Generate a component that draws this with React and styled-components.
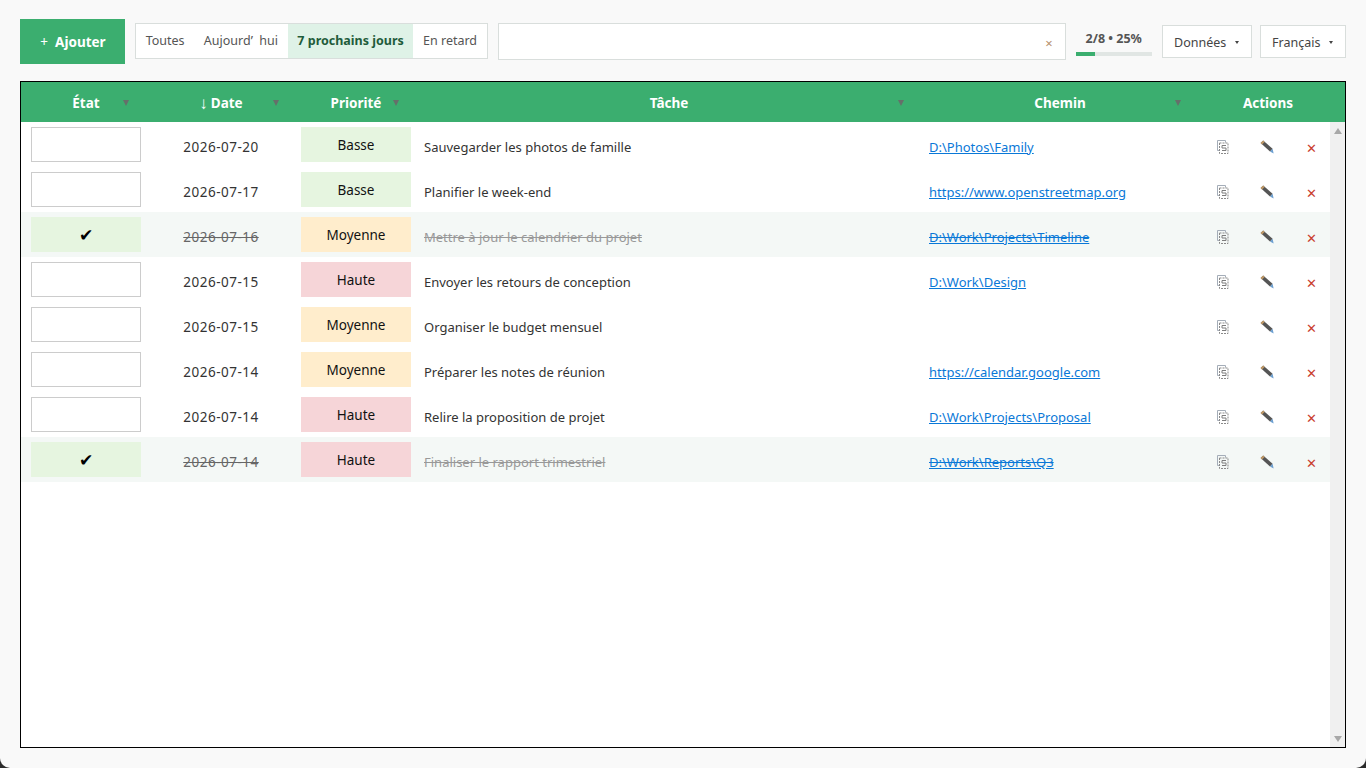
import React from "react";
import styled, { createGlobalStyle } from "styled-components";

const GREEN = "#3bae6f";
const COLUMNS = "130px 140px 130px 496px 286px 1fr";

const GlobalStyle = createGlobalStyle`
  html {
    background: #2b2b2b;
    height: 100%;
  }
  body {
    margin: 0;
    height: 768px;
    overflow: hidden;
    background: #f9f9f9;
    border-radius: 0 0 10px 10px;
    font-family: "Noto Sans", "Open Sans", sans-serif;
    font-size: 13px;
    color: #333;
  }
`;

const Page = styled.div`
  display: flex;
  flex-direction: column;
  height: 768px;
  padding: 19px 20px 20px;
  box-sizing: border-box;
`;

const Toolbar = styled.div`
  display: flex;
  align-items: center;
  height: 45px;
  margin-bottom: 17px;
`;

const AddButton = styled.button`
  width: 105px;
  height: 45px;
  margin-right: 10px;
  padding: 1px 0 0 1px;
  border: 0;
  background: ${GREEN};
  color: #fff;
  font: 700 13.5px "Noto Sans", sans-serif;
  span {
    font-weight: 400;
    margin-right: 7px;
  }
`;

const Filters = styled.div`
  display: flex;
  height: 34px;
  margin: -1px 10px 0 0;
  border: 1px solid #d9dedc;
  background: #fff;
`;

const Filter = styled.div`
  display: flex;
  align-items: center;
  padding: 0 9.65px 1px;
  font-size: 12.5px;
  font-weight: ${(p) => (p.$active ? 700 : 400)};
  color: ${(p) => (p.$active ? "#1f5c3b" : "#555")};
  background: ${(p) => (p.$active ? "#dff2e7" : "transparent")};
  white-space: pre;
`;

const Search = styled.div`
  display: flex;
  align-items: center;
  justify-content: flex-end;
  width: 568px;
  height: 37px;
  margin: 0 10px 0 0;
  padding: 2px 12px 0 0;
  box-sizing: border-box;
  border: 1px solid #d9dedc;
  background: #fff;
  color: #b5906a;
  font-size: 13px;
`;

const Progress = styled.div`
  width: 76px;
  margin: 4px 10px 0 0;
  text-align: center;
  font-size: 12.5px;
  font-weight: 700;
  color: #555;
`;

const ProgressLabel = styled.div`
  line-height: 16px;
  margin-bottom: 5px;
`;

const ProgressTrack = styled.div`
  height: 4px;
  background: #e1e6e4;
`;

const ProgressFill = styled.div`
  height: 100%;
  background: ${GREEN};
`;

const Dropdown = styled.div`
  display: flex;
  align-items: center;
  justify-content: center;
  gap: 9px;
  width: ${(p) => p.$width}px;
  height: 33px;
  margin-right: ${(p) => p.$gap}px;
  padding-top: 1px;
  box-sizing: border-box;
  border: 1px solid #d9dedc;
  background: #fff;
  font-size: 12.5px;
  color: #444;
  i {
    border: 2px solid transparent;
    border-top: 3px solid #444;
    border-bottom: 0;
  }
`;

const Table = styled.div`
  display: flex;
  flex-direction: column;
  height: 667px;
  box-sizing: border-box;
  border: 1px solid #000;
  background: #fff;
`;

const HeaderRow = styled.div`
  display: grid;
  grid-template-columns: ${COLUMNS};
  height: 40px;
  background: ${GREEN};
  color: #fff;
  font-weight: 700;
  font-size: 13.5px;
`;

const HeaderCell = styled.div`
  position: relative;
  display: flex;
  align-items: center;
  justify-content: center;
  padding: 1px ${(p) => p.$pad || 0}px 0 0;
`;

const SortArrow = styled.span`
  font-weight: 400;
  font-size: 17px;
  line-height: 1;
  margin-right: 3px;
`;

const FilterMark = styled.i`
  position: absolute;
  top: 18px;
  right: ${(p) => p.$right}px;
  border: 3.5px solid transparent;
  border-top: 6px solid #666f6a;
  border-bottom: 0;
`;

const Body = styled.div`
  display: flex;
  flex: 1;
  min-height: 0;
`;

const Rows = styled.div`
  flex: 1;
  min-width: 0;
`;

const Row = styled.div`
  display: grid;
  grid-template-columns: ${COLUMNS};
  height: 45px;
  background: ${(p) => (p.$done ? "#f4f8f6" : "transparent")};
`;

const Cell = styled.div`
  display: flex;
  align-items: center;
  padding-top: 5px;
  box-sizing: border-box;
  color: ${(p) => (p.$done ? "#999" : "#333")};
  text-decoration: ${(p) => (p.$done ? "line-through" : "none")};
`;

const StateBox = styled.div`
  width: 110px;
  height: 35px;
  margin: 5px 0 0 10px;
  display: flex;
  align-items: center;
  justify-content: center;
  box-sizing: border-box;
  border: ${(p) => (p.$done ? "0" : "1px solid #ccc")};
  background: ${(p) => (p.$done ? "#e6f5e0" : "#fff")};
  color: #000;
  font: 17px "DejaVu Sans", sans-serif;
`;

const DateCell = styled(Cell)`
  justify-content: center;
  font-size: 13.5px;
  letter-spacing: 0.5px;
  color: ${(p) => (p.$done ? "#666" : "#333")};
`;

const PriorityBox = styled.div`
  width: 110px;
  height: 35px;
  margin: 5px 0 0 10px;
  display: flex;
  align-items: center;
  justify-content: center;
  background: ${(p) => p.$bg};
  color: #111;
  font-size: 13.5px;
  box-sizing: border-box;
`;

const TaskCell = styled(Cell)`
  padding-left: 3px;
`;

const PathCell = styled(Cell)`
  padding-left: 12px;
`;

const PathLink = styled.a`
  color: #0a78d7;
  text-decoration-line: ${(p) => (p.$done ? "underline line-through" : "underline")};
`;

const Actions = styled.div`
  display: grid;
  grid-template-columns: repeat(3, 44px);
  align-items: center;
  justify-items: center;
  padding-top: 5px;
  margin-left: -2px;
  min-width: 0;
`;

const Remove = styled.span`
  color: #c9402f;
  font-size: 13px;
  line-height: 1;
  margin-top: 3px;
`;

const Scrollbar = styled.div`
  display: flex;
  flex: none;
  flex-direction: column;
  justify-content: space-between;
  align-items: center;
  width: 15px;
  padding: 6px 0 5px;
  box-sizing: border-box;
  background: #f0f0f0;
`;

const ScrollArrow = styled.i`
  border: 4.5px solid transparent;
  border-${(p) => (p.$down ? "top" : "bottom")}: 6px solid #a8a8a8;
  border-${(p) => (p.$down ? "bottom" : "top")}: 0;
`;

const CopyIcon = () => (
  <svg width="12" height="14" viewBox="0 0 12 14" fill="none">
    <path d="M.5.5h8v2M.5.5v10h2" stroke="#a4adb8" />
    <path d="M2.500 3h8.500v10.500H2.500z" stroke="#8a8a8a" strokeDasharray="2 1" />
    <path d="M5 5.500h4M5 8h4M5 10.500h4M5 5.500V8M9 8v2.500" stroke="#7d7d7d" />
  </svg>
);

const PencilIcon = () => (
  <svg width="14" height="14" viewBox="0 0 14 14">
    <path d="M3.200.6 12.600 8.800 10 11.500.6 3.100z" fill="#555" />
    <path d="M.6 3.100 3.200.6 4.600 1.900 2 4.400z" fill="#c29a66" />
    <path d="M12.600 8.800 13.600 13.400 10 11.500z" fill="#6c9fd0" />
  </svg>
);

const tasks = [
  { date: "2026-07-20", priority: "Basse", title: "Sauvegarder les photos de famille", path: "D:\\Photos\\Family" },
  { date: "2026-07-17", priority: "Basse", title: "Planifier le week-end", path: "https://www.openstreetmap.org" },
  { date: "2026-07-16", priority: "Moyenne", title: "Mettre à jour le calendrier du projet", path: "D:\\Work\\Projects\\Timeline", done: true },
  { date: "2026-07-15", priority: "Haute", title: "Envoyer les retours de conception", path: "D:\\Work\\Design" },
  { date: "2026-07-15", priority: "Moyenne", title: "Organiser le budget mensuel", path: "" },
  { date: "2026-07-14", priority: "Moyenne", title: "Préparer les notes de réunion", path: "https://calendar.google.com" },
  { date: "2026-07-14", priority: "Haute", title: "Relire la proposition de projet", path: "D:\\Work\\Projects\\Proposal" },
  { date: "2026-07-14", priority: "Haute", title: "Finaliser le rapport trimestriel", path: "D:\\Work\\Reports\\Q3", done: true },
];

const priorityColors = { Basse: "#e6f5e0", Moyenne: "#ffedcc", Haute: "#f6d5d8" };

export default function App() {
  return (
    <Page>
      <GlobalStyle />
      <Toolbar>
        <AddButton>
          <span>+</span>Ajouter
        </AddButton>
        <Filters>
          <Filter>Toutes</Filter>
          <Filter>{"Aujourd’  hui"}</Filter>
          <Filter $active>7 prochains jours</Filter>
          <Filter>En retard</Filter>
        </Filters>
        <Search>×</Search>
        <Progress>
          <ProgressLabel>2/8 • 25%</ProgressLabel>
          <ProgressTrack>
            <ProgressFill style={{ width: "25%" }} />
          </ProgressTrack>
        </Progress>
        <Dropdown $width={90} $gap={8}>
          Données<i />
        </Dropdown>
        <Dropdown $width={86} $gap={0}>
          Français<i />
        </Dropdown>
      </Toolbar>
      <Table>
        <HeaderRow>
          <HeaderCell>
            État<FilterMark $right={22} />
          </HeaderCell>
          <HeaderCell>
            <SortArrow>↓</SortArrow>Date<FilterMark $right={12} />
          </HeaderCell>
          <HeaderCell>
            Priorité<FilterMark $right={22} />
          </HeaderCell>
          <HeaderCell>
            Tâche<FilterMark $right={13} />
          </HeaderCell>
          <HeaderCell>
            Chemin<FilterMark $right={22} />
          </HeaderCell>
          <HeaderCell $pad={12}>Actions</HeaderCell>
        </HeaderRow>
        <Body>
          <Rows>
            {tasks.map((t) => (
              <Row key={t.title} $done={t.done}>
                <StateBox $done={t.done}>{t.done ? "✔" : ""}</StateBox>
                <DateCell $done={t.done}>{t.date}</DateCell>
                <PriorityBox $bg={priorityColors[t.priority]}>{t.priority}</PriorityBox>
                <TaskCell $done={t.done}>{t.title}</TaskCell>
                <PathCell>
                  {t.path && <PathLink $done={t.done}>{t.path}</PathLink>}
                </PathCell>
                <Actions>
                  <CopyIcon />
                  <PencilIcon />
                  <Remove>✕</Remove>
                </Actions>
              </Row>
            ))}
          </Rows>
          <Scrollbar>
            <ScrollArrow />
            <ScrollArrow $down />
          </Scrollbar>
        </Body>
      </Table>
    </Page>
  );
}
